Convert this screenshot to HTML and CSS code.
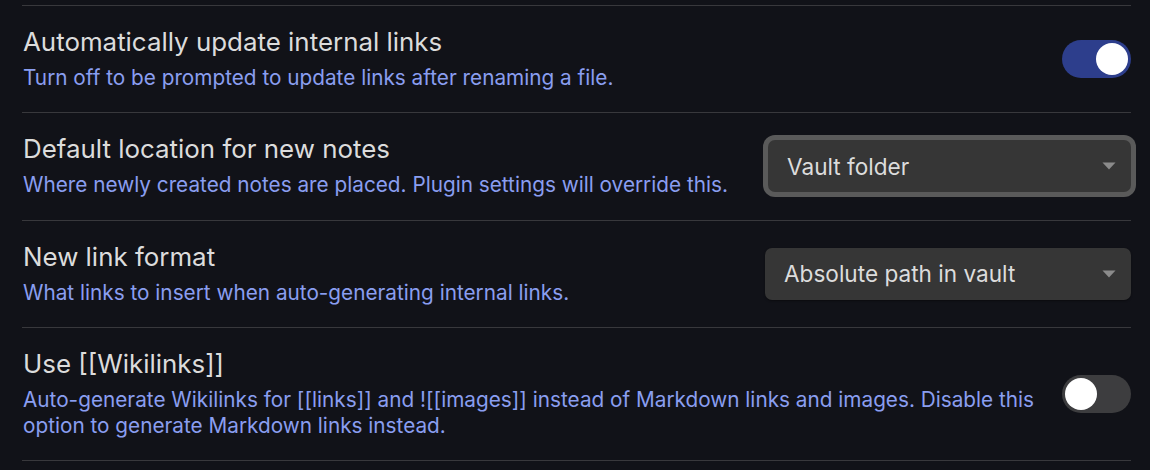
FILE: index.html
```html
<!DOCTYPE html>
<html lang="en">
<head>
<meta charset="utf-8">
<title>Settings</title>
<link rel="stylesheet" href="styles.css">
</head>
<body>
<div class="settings">
  <div class="setting-item">
    <div class="setting-info">
      <div class="setting-name">Automatically update internal links</div>
      <div class="setting-desc">Turn off to be prompted to update links after renaming a file.</div>
    </div>
    <div class="setting-control">
      <div class="toggle is-on"><span class="knob"></span></div>
    </div>
  </div>
  <div class="setting-item">
    <div class="setting-info">
      <div class="setting-name">Default location for new notes</div>
      <div class="setting-desc">Where newly created notes are placed. Plugin settings will override this.</div>
    </div>
    <div class="setting-control">
      <div class="dropdown is-focused dropdown-narrow">
        <span class="dropdown-value">Vault folder</span>
        <svg class="dropdown-arrow" width="14" height="8" viewBox="0 0 14 8"><path d="M0.5 0.5 H13.5 L7 7.5 Z" fill="#8b8b8b"/></svg>
      </div>
    </div>
  </div>
  <div class="setting-item">
    <div class="setting-info">
      <div class="setting-name">New link format</div>
      <div class="setting-desc">What links to insert when auto-generating internal links.</div>
    </div>
    <div class="setting-control">
      <div class="dropdown">
        <span class="dropdown-value">Absolute path in vault</span>
        <svg class="dropdown-arrow" width="14" height="8" viewBox="0 0 14 8"><path d="M0.5 0.5 H13.5 L7 7.5 Z" fill="#8b8b8b"/></svg>
      </div>
    </div>
  </div>
  <div class="setting-item last">
    <div class="setting-info">
      <div class="setting-name">Use [[Wikilinks]]</div>
      <div class="setting-desc">Auto-generate Wikilinks for [[links]] and ![[images]] instead of Markdown links and images. Disable this option to generate Markdown links instead.</div>
    </div>
    <div class="setting-control">
      <div class="toggle"><span class="knob"></span></div>
    </div>
  </div>
</div>
</body>
</html>
```
FILE: styles.css
```css
html, body {
  margin: 0;
  padding: 0;
  background: #111218;
}
body {
  font-family: Inter, "Noto Sans", sans-serif;
  width: 1150px;
  height: 470px;
  overflow: hidden;
}
.settings {
  padding: 5px 19px 0 22px;
}
.setting-item {
  display: flex;
  align-items: center;
  gap: 20px;
  border-top: 1px solid #38383c;
  padding: 21px 0 21.35px 1px;
}
.setting-item.last {
  border-bottom: 1px solid #38383c;
}
.setting-info {
  flex: 1 1 auto;
  min-width: 0;
}
.setting-name {
  font-size: 25.9px;
  line-height: 30px;
  color: #dcdcdc;
  margin-bottom: 8px;
}
.setting-desc {
  font-size: 20.75px;
  line-height: 26px;
  color: #8a9ef0;
}
.setting-control {
  flex: 0 0 auto;
  display: flex;
  justify-content: flex-end;
}
.toggle {
  width: 69px;
  height: 38px;
  border-radius: 19px;
  background: #3d3d3f;
  position: relative;
}
.toggle.is-on {
  background: #2d3e8c;
}
.knob {
  position: absolute;
  top: 3px;
  left: 3px;
  width: 32px;
  height: 32px;
  border-radius: 50%;
  background: #ffffff;
}
.toggle.is-on .knob {
  left: 34px;
}
.dropdown {
  width: 366px;
  height: 52px;
  box-sizing: border-box;
  background: #363636;
  border-radius: 7px;
  display: flex;
  align-items: center;
  justify-content: space-between;
  padding: 0 15px 0 19px;
  box-shadow: 0 1px 2px rgba(0, 0, 0, 0.4);
}
.dropdown-narrow {
  width: 363px;
}
.dropdown.is-focused {
  box-shadow: 0 0 0 5px #5a5a5a;
}
.dropdown-value {
  font-size: 22.6px;
  color: #dcdcdc;
}
.dropdown-arrow {
  display: block;
}
```
